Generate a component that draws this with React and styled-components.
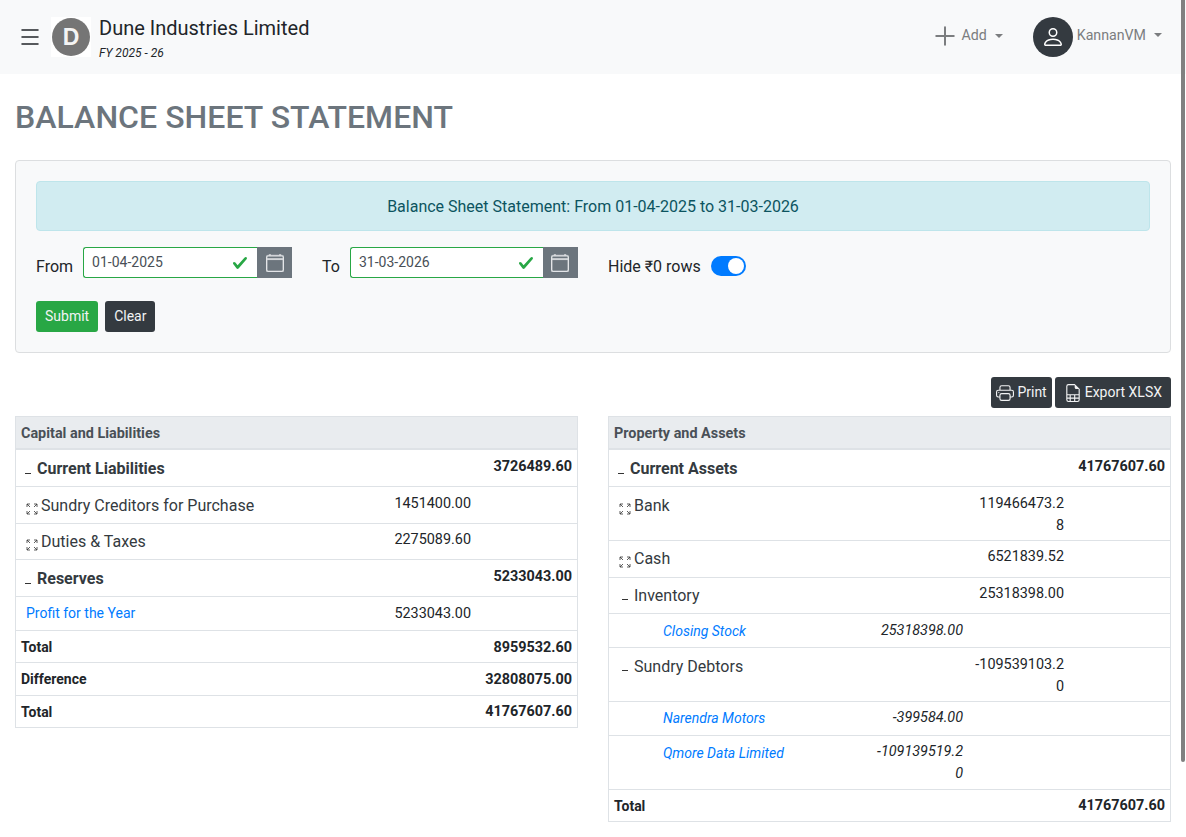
import React from "react";
import styled, { createGlobalStyle } from "styled-components";
import { Menu, Plus } from "lucide-react";
import { BsPerson, BsPrinter, BsFileEarmarkSpreadsheet, BsCalendar4 } from "react-icons/bs";

const GlobalStyle = createGlobalStyle`
  body {
    margin: 0;
    background: #fff;
    color: #212529;
    font-family: Roboto, "Liberation Sans", sans-serif;
    font-size: 16px;
    line-height: 1.5;
  }
`;

// overlay scrollbar thumb, it floats over the page
const ScrollThumb = styled.div`
  position: fixed;
  top: 0;
  right: 1px;
  width: 4px;
  height: 762px;
  border-radius: 0 0 2px 2px;
  background: #808080;
`;

const Navbar = styled.nav`
  display: flex;
  align-items: center;
  height: 74px;
  background: #f8f9fa;
  padding: 0 24px 0 18px;
`;

const MenuButton = styled.span`
  display: flex;
  color: #212529;
  margin-right: 9px;
`;

const LogoBox = styled.span`
  display: flex;
  align-items: center;
  justify-content: center;
  width: 40px;
  height: 40px;
  background: #fff;
  margin-right: 8px;
`;

const Logo = styled.span`
  display: flex;
  align-items: center;
  justify-content: center;
  width: 38px;
  height: 38px;
  border-radius: 50%;
  background: #757575;
  color: #f4f4f4;
  font-size: 23px;
  font-weight: 700;
  font-family: "Liberation Sans", sans-serif;
`;

const Brand = styled.div`
  display: flex;
  flex-direction: column;
`;

const BrandName = styled.span`
  font-size: 20px;
  line-height: 30px;
  color: #212529;
`;

const BrandYear = styled.span`
  font-size: 12px;
  line-height: 18px;
  font-style: italic;
  margin-top: 1px;
`;

const NavRight = styled.div`
  display: flex;
  align-items: center;
  margin-left: auto;
`;

const NavItem = styled.span`
  display: flex;
  align-items: center;
  margin-left: ${(p) => p.$gap || 0}px;
`;

const NavText = styled.span`
  display: flex;
  align-items: center;
  font-size: 14.2px;
  color: #7b7d7f;
  margin-bottom: 3px;
  &::after {
    content: "";
    margin-left: 8px;
    border-top: 4px solid #7b7d7f;
    border-left: 4px solid transparent;
    border-right: 4px solid transparent;
  }
`;

const PlusMark = styled.span`
  display: flex;
  margin-right: 1px;
`;

const Avatar = styled.span`
  display: flex;
  align-items: center;
  justify-content: center;
  width: 40px;
  height: 40px;
  border-radius: 50%;
  background: #343a40;
  color: #fff;
  margin-right: 4px;
`;

const Page = styled.main`
  padding: 0 15px 97px;
`;

const Title = styled.h1`
  margin: 22px 0 22px;
  font-size: 32px;
  line-height: 42px;
  font-weight: 500;
  letter-spacing: 0.04px;
  color: #6c757d;
`;

const FilterCard = styled.section`
  background: #f8f9fa;
  border: 1px solid #dcdee0;
  border-radius: 4px;
  padding: 20px;
`;

const Alert = styled.div`
  background: #d1ecf1;
  border: 1px solid #bee5eb;
  border-radius: 4px;
  color: #0c5460;
  text-align: center;
  font-size: 16px;
  line-height: 24px;
  padding: 13px 12px 11px;
`;

const FilterRow = styled.div`
  display: flex;
  align-items: center;
  margin-top: 16px;
  height: 31px;
`;

const FieldLabel = styled.label`
  font-size: 16px;
  margin-right: ${(p) => p.$right}px;
  margin-top: 9px;
`;

const DateGroup = styled.div`
  display: flex;
  align-items: stretch;
  width: ${(p) => p.$width}px;
  height: 31px;
  margin-right: ${(p) => p.$right}px;
`;

const DateInput = styled.div`
  flex: 1;
  display: flex;
  align-items: center;
  justify-content: space-between;
  background: #fff;
  border: 1px solid #28a745;
  border-right: 0;
  border-radius: 3px 0 0 3px;
  padding: 0 9px 0 8px;
  font-size: 14px;
  color: #495057;
`;

const CheckMark = styled.svg`
  width: 16px;
  height: 16px;
  margin-top: 1px;
  fill: #28a745;
`;

const CalendarButton = styled.span`
  display: flex;
  align-items: center;
  justify-content: center;
  width: 35px;
  background: #6c757d;
  color: #e4e6e8;
`;

const SwitchLabel = styled.span`
  font-size: 16px;
  margin: 8px 10px 0 0;
`;

const Switch = styled.span`
  display: flex;
  align-items: center;
  justify-content: flex-end;
  width: 35px;
  height: 20px;
  margin-top: 6px;
  border-radius: 10px;
  background: #007bff;
  padding: 0 2px;
  box-sizing: border-box;
  &::after {
    content: "";
    width: 16px;
    height: 16px;
    border-radius: 50%;
    background: #fff;
  }
`;

const ButtonRow = styled.div`
  display: flex;
  gap: 7px;
  margin-top: 23px;
`;

const Button = styled.button`
  display: inline-flex;
  align-items: center;
  height: 31px;
  padding: 0 9px 2px;
  border: 0;
  border-radius: 3px;
  color: #f2f3f4;
  background: ${(p) => (p.$green ? "#28a745" : "#343a40")};
  font-family: inherit;
  font-size: 14px;
`;

const ExportRow = styled.div`
  display: flex;
  justify-content: flex-end;
  gap: 3px;
  margin-top: 24px;
`;

const ExportButton = styled(Button)`
  gap: ${(p) => p.$gap}px;
  padding: 0 ${(p) => p.$pad}px 2px;
  svg {
    margin-top: 2px;
  }
`;

const Columns = styled.div`
  display: grid;
  grid-template-columns: 563px 563px;
  justify-content: space-between;
  gap: 30px;
  margin-top: 8px;
  align-items: start;
`;

const Ledger = styled.div`
  border: 1px solid #dee2e6;
  border-bottom: 0;
  font-size: 16px;
`;

const LedgerHead = styled.div`
  background: #e9ecef;
  border-bottom: 2px solid #dee2e6;
  color: #495057;
  font-size: 14.4px;
  font-weight: 700;
  line-height: 21px;
  padding: 6px 5px 5px;
  height: 33px;
  box-sizing: border-box;
`;

const Row = styled.div`
  display: grid;
  grid-template-columns: ${(p) => (p.$sub ? "1fr 101px 101px 101px" : "1fr 101px 101px")};
  border-bottom: 1px solid #dee2e6;
  color: #343a40;
  min-height: ${(p) => p.$height}px;
  box-sizing: border-box;
  font-size: ${(p) => (p.$total ? 14 : 16)}px;
  font-weight: ${(p) => (p.$bold ? 700 : 400)};
  line-height: 24px;
  padding: ${(p) => p.$top ?? 6}px 0 0;
`;

const Name = styled.div`
  display: flex;
  align-items: flex-start;
  padding-left: ${(p) => p.$indent || 5}px;
  color: ${(p) => (p.$total ? "#212529" : "inherit")};
`;

const Amount = styled.div`
  font-size: 14.4px;
  line-height: 21.6px;
  text-align: right;
  padding: 0 5px;
  color: #212529;
  word-break: break-all;
  margin-top: ${(p) => p.$shift || 0}px;
  font-weight: ${(p) => (p.$bold ? 700 : 400)};
  font-style: ${(p) => (p.$italic ? "italic" : "normal")};
`;

const Toggle = styled.span`
  flex: none;
  display: flex;
  width: ${(p) => p.$width}px;
  padding-top: ${(p) => p.$top}px;
  box-sizing: border-box;
`;

const Dash = styled.span`
  width: 6px;
  height: 1px;
  background: #333;
  margin-left: ${(p) => p.$left}px;
`;

const ExpandGlyph = styled.svg`
  width: 12px;
  height: 12px;
  margin-left: 5px;
  fill: none;
  stroke: #333;
  stroke-width: 0.8;
`;

const RowLink = styled.a`
  color: #007bff;
  font-size: 14px;
  text-decoration: none;
  font-style: ${(p) => (p.$italic ? "italic" : "normal")};
`;

// four little arrows of the expand icon
const ExpandIcon = () => (
  <ExpandGlyph viewBox="0 0 12 12">
    <path d="M1 4V1h3M1 1l3 3M11 4V1H8M11 1 8 4M1 8v3h3M1 11l3-3M11 8v3H8M11 11 8 8" />
  </ExpandGlyph>
);

const ValidCheck = () => (
  <CheckMark viewBox="0 0 8 8">
    <path d="M2.3 6.73L.6 4.53c-.4-1.04.46-1.4 1.1-.8l1.1 1.4 3.4-3.8c.6-.63 1.6-.27 1.2.7l-4 4.6c-.43.5-.8.4-1.1.1z" />
  </CheckMark>
);

const DateField = ({ value, width, right }) => (
  <DateGroup $width={width} $right={right}>
    <DateInput>
      {value}
      <ValidCheck />
    </DateInput>
    <CalendarButton>
      <BsCalendar4 size={18} stroke="currentColor" strokeWidth={0.4} />
    </CalendarButton>
  </DateGroup>
);

// bold group: total sits in the last column
const GroupRow = ({ name, total, height, top }) => (
  <Row $height={height} $bold $top={top}>
    <Name>
      <Toggle $width={16} $top={16}>
        <Dash $left={4} />
      </Toggle>
      <span>{name}</span>
    </Name>
    <div />
    <Amount $bold $shift={-1}>
      {total}
    </Amount>
  </Row>
);

// plain group: total sits in the middle column
const SubGroupRow = ({ name, total, height, top }) => (
  <Row $height={height} $top={top}>
    <Name>
      <Toggle $width={20} $top={15}>
        <Dash $left={8} />
      </Toggle>
      <span>{name}</span>
    </Name>
    <Amount $shift={-1}>{total}</Amount>
    <div />
  </Row>
);

const AccountRow = ({ name, amount, height, top }) => (
  <Row $height={height} $top={top}>
    <Name>
      <Toggle $width={20} $top={9}>
        <ExpandIcon />
      </Toggle>
      <span>{name}</span>
    </Name>
    <Amount $shift={-1}>{amount}</Amount>
    <div />
  </Row>
);

const SubRow = ({ name, amount, height, top = 5, shift = 1 }) => (
  <Row $sub $height={height} $top={top}>
    <Name $indent={54}>
      <RowLink $italic href="#">
        {name}
      </RowLink>
    </Name>
    <Amount $italic $shift={shift}>
      {amount}
    </Amount>
    <div />
    <div />
  </Row>
);

const TotalRow = ({ label, value, height = 32, shift = 1 }) => (
  <Row $total $bold $height={height} $top={4}>
    <Name $total>{label}</Name>
    <div />
    <Amount $bold $shift={shift}>
      {value}
    </Amount>
  </Row>
);

export default function App() {
  return (
    <>
      <GlobalStyle />
      <ScrollThumb />
      <Navbar>
        <MenuButton>
          <Menu size={24} strokeWidth={1.5} />
        </MenuButton>
        <LogoBox>
          <Logo>D</Logo>
        </LogoBox>
        <Brand>
          <BrandName>Dune Industries Limited</BrandName>
          <BrandYear>FY 2025 - 26</BrandYear>
        </Brand>
        <NavRight>
          <NavItem>
            <NavText>
              <PlusMark>
                <Plus size={30} strokeWidth={1.6} />
              </PlusMark>
              Add
            </NavText>
          </NavItem>
          <NavItem $gap={30}>
            <Avatar>
              <BsPerson size={24} />
            </Avatar>
            <NavText>KannanVM</NavText>
          </NavItem>
        </NavRight>
      </Navbar>

      <Page>
        <Title>BALANCE SHEET STATEMENT</Title>

        <FilterCard>
          <Alert>Balance Sheet Statement: From 01-04-2025 to 31-03-2026</Alert>
          <FilterRow>
            <FieldLabel $right={10}>From</FieldLabel>
            <DateField value="01-04-2025" width={209} right={30} />
            <FieldLabel $right={10}>To</FieldLabel>
            <DateField value="31-03-2026" width={228} right={30} />
            <SwitchLabel>Hide ₹0 rows</SwitchLabel>
            <Switch />
          </FilterRow>
          <ButtonRow>
            <Button $green>Submit</Button>
            <Button>Clear</Button>
          </ButtonRow>
        </FilterCard>

        <ExportRow>
          <ExportButton $pad={5} $gap={3}>
            <BsPrinter size={18} />
            Print
          </ExportButton>
          <ExportButton $pad={9} $gap={3}>
            <BsFileEarmarkSpreadsheet size={18} />
            Export XLSX
          </ExportButton>
        </ExportRow>

        <Columns>
          <Ledger>
            <LedgerHead>Capital and Liabilities</LedgerHead>
            <GroupRow name="Current Liabilities" total="3726489.60" height={37} top={7} />
            <AccountRow name="Sundry Creditors for Purchase" amount="1451400.00" height={37} top={7} />
            <AccountRow name="Duties & Taxes" amount="2275089.60" height={36} />
            <GroupRow name="Reserves" total="5233043.00" height={37} top={7} />
            <Row $height={34} $top={4}>
              <Name $indent={10}>
                <RowLink href="#">Profit for the Year</RowLink>
              </Name>
              <Amount $shift={2}>5233043.00</Amount>
              <div />
            </Row>
            <TotalRow label="Total" value="8959532.60" shift={2} />
            <TotalRow label="Difference" value="32808075.00" height={33} shift={2} />
            <TotalRow label="Total" value="41767607.60" />
          </Ledger>

          <Ledger>
            <LedgerHead>Property and Assets</LedgerHead>
            <GroupRow name="Current Assets" total="41767607.60" height={37} top={7} />
            <AccountRow name="Bank" amount="119466473.28" height={54} top={7} />
            <AccountRow name="Cash" amount="6521839.52" height={37} />
            <SubGroupRow name="Inventory" total="25318398.00" height={36} />
            <SubRow name="Closing Stock" amount="25318398.00" height={34} />
            <SubGroupRow name="Sundry Debtors" total="-109539103.20" height={54} top={7} />
            <SubRow name="Narendra Motors" amount="-399584.00" height={34} top={4} />
            <SubRow name="Qmore Data Limited" amount="-109139519.20" height={54} shift={0} />
            <TotalRow label="Total" value="41767607.60" />
          </Ledger>
        </Columns>
      </Page>
    </>
  );
}
